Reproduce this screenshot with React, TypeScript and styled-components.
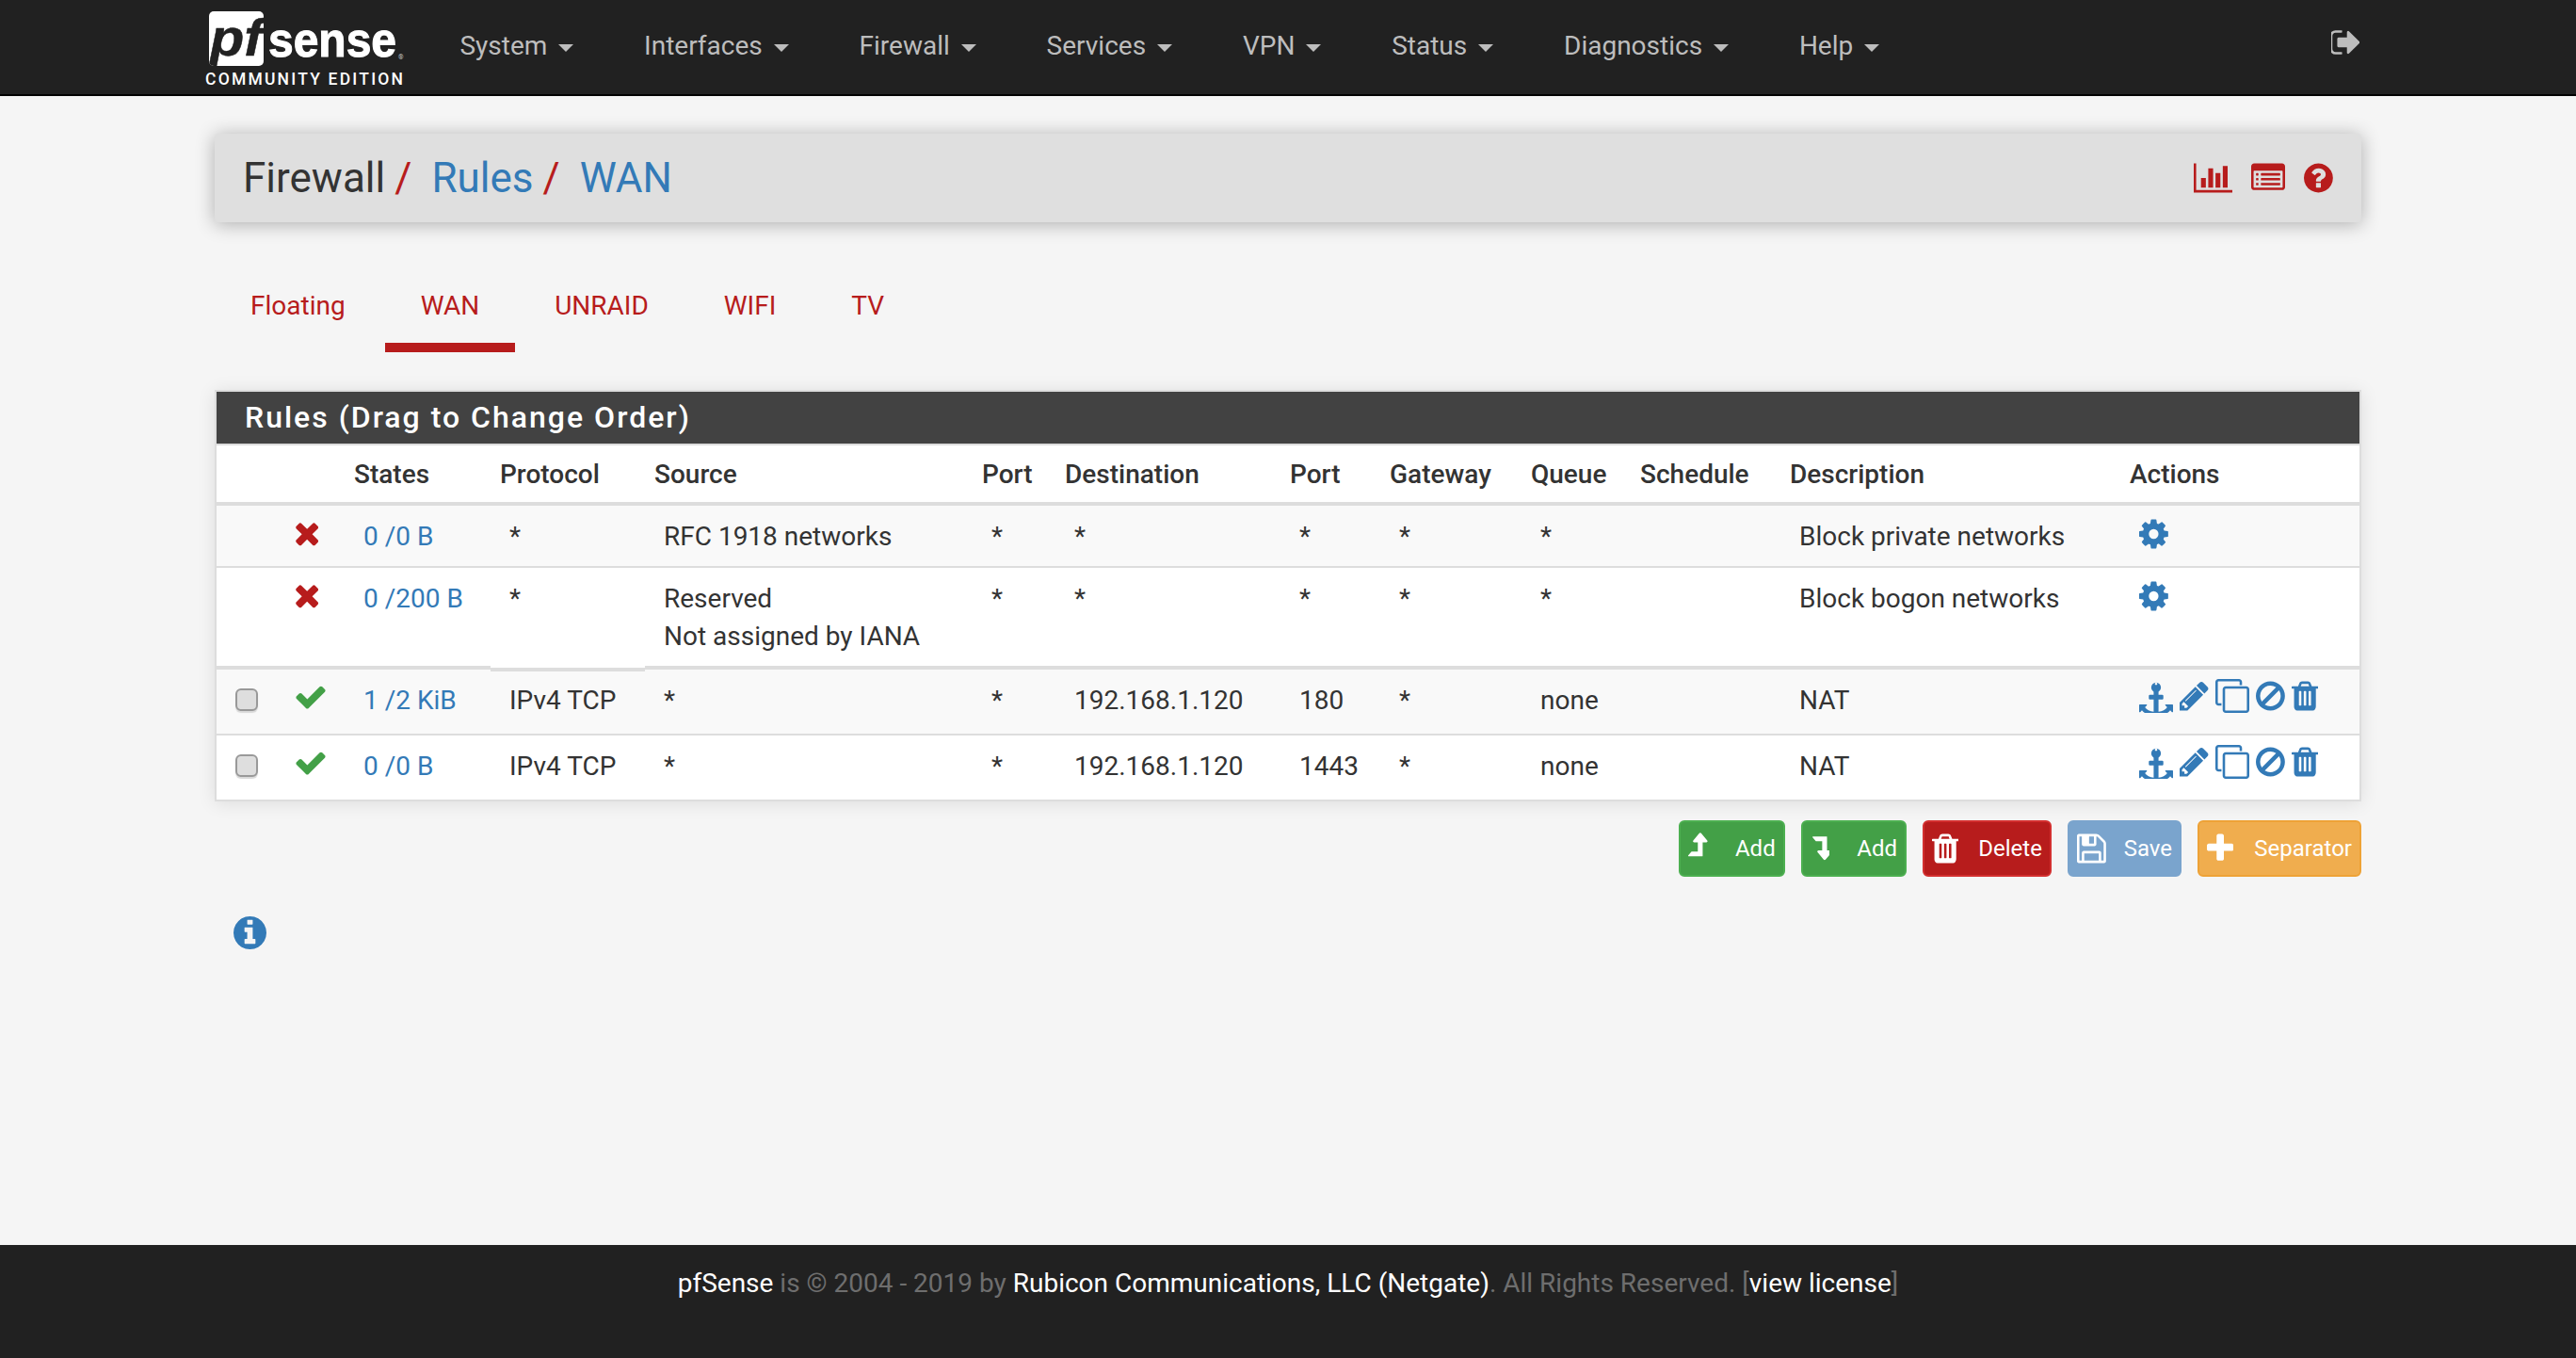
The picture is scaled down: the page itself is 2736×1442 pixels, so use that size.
import React from "react";
import styled, { createGlobalStyle } from "styled-components";

const Global = createGlobalStyle`
  html, body { margin: 0; padding: 0; height: 100%; background: #f5f5f5; }
  body { font-family: Roboto, "Liberation Sans", sans-serif; font-size: 28px; line-height: 40px; color: #212121; }
  #root { height: 100%; }
`;

const PATHS: Record<string, { d: string; x: number; w: number }> = {
  times: { x: 192, w: 1408, d: "M1490 1322q0 40-28 68l-136 136q-28 28-68 28t-68-28l-294-294-294 294q-28 28-68 28t-68-28l-136-136q-28-28-28-68t28-68l294-294-294-294q-28-28-28-68t28-68l136-136q28-28 68-28t68 28l294 294 294-294q28-28 68-28t68 28l136 136q28 28 28 68t-28 68l-294 294 294 294q28 28 28 68z" },
  check: { x: 0, w: 1792, d: "M1671 566q0 40-28 68l-724 724-136 136q-28 28-68 28t-68-28l-136-136-362-362q-28-28-28-68t28-68l136-136q28-28 68-28t68 28l294 295 656-657q28-28 68-28t68 28l136 136q28 28 28 68z" },
  cog: { x: 128, w: 1536, d: "M1152 896q0-106-75-181t-181-75-181 75-75 181 75 181 181 75 181-75 75-181zm512-109v222q0 12-8 23t-20 13l-185 28q-19 54-39 91 35 50 107 138 10 12 10 25t-9 23q-27 37-99 108t-94 71q-12 0-26-9l-138-108q-44 23-91 38-16 136-29 186-7 28-36 28h-222q-14 0-24.500-8.500t-11.500-21.500l-28-184q-49-16-90-37l-141 107q-10 9-25 9-14 0-25-11-126-114-165-168-7-10-7-23 0-12 8-23 15-21 51-66.500t54-70.500q-27-50-41-99l-183-27q-13-2-21-12.500t-8-23.500v-222q0-12 8-23t19-13l186-28q14-46 39-92-40-57-107-138-10-12-10-24 0-10 9-23 26-36 98.500-107.500t94.500-71.500q13 0 26 10l138 107q44-23 91-38 16-136 29-186 7-28 36-28h222q14 0 24.500 8.500t11.500 21.500l28 184q49 16 90 37l142-107q9-9 24-9 13 0 25 10 129 119 165 170 7 8 7 22 0 12-8 23-15 21-51 66.500t-54 70.500q26 50 41 98l183 28q13 2 21 12.500t8 23.500z" },
  anchor: { x: 0, w: 1792, d: "M960 256q0-26-19-45t-45-19-45 19-19 45 19 45 45 19 45-19 19-45zm832 1120v352q0 22-20 30-8 2-12 2-12 0-23-9l-93-93q-119 143-318.500 226.500t-429.500 83.500-429.500-83.500-318.500-226.500l-93 93q-9 9-23 9-4 0-12-2-20-8-20-30v-352q0-14 9-23t23-9h352q22 0 30 20 8 19-7 35l-100 100q67 91 189.500 153.500t271.500 82.500v-647h-192q-26 0-45-19t-19-45v-128q0-26 19-45t45-19h192v-163q-58-34-93-92.500t-35-128.500q0-106 75-181t181-75 181 75 75 181q0 70-35 128.500t-93 92.500v163h192q26 0 45 19t19 45v128q0 26-19 45t-45 19h-192v647q149-20 271.500-82.500t189.500-153.500l-100-100q-15-16-7-35 8-20 30-20h352q14 0 23 9t9 23z" },
  pencil: { x: 128, w: 1536, d: "M491 1536l91-91-235-235-91 91v107h128v128h107zm523-928q0-22-22-22-10 0-17 7l-542 542q-7 7-7 17 0 22 22 22 10 0 17-7l542-542q7-7 7-17zm-54-192l416 416-832 832h-416v-416zm683 96q0 53-37 90l-166 166-416-416 166-165q36-38 90-38 53 0 91 38l235 234q37 39 37 91z" },
  clone: { x: 0, w: 1792, d: "M1664 1632v-1088q0-13-9.500-22.500t-22.500-9.500h-1088q-13 0-22.500 9.500t-9.500 22.500v1088q0 13 9.500 22.500t22.500 9.500h1088q13 0 22.500-9.500t9.500-22.500zm128-1088v1088q0 66-47 113t-113 47h-1088q-66 0-113-47t-47-113v-1088q0-66 47-113t113-47h1088q66 0 113 47t47 113zm-384-384v160h-128v-160q0-13-9.500-22.500t-22.500-9.500h-1088q-13 0-22.500 9.500t-9.500 22.500v1088q0 13 9.500 22.500t22.500 9.500h160v128h-160q-66 0-113-47t-47-113v-1088q0-66 47-113t113-47h1088q66 0 113 47t47 113z" },
  ban: { x: 128, w: 1536, d: "M1440 893q0-161-87-295l-754 753q137 89 297 89 111 0 211.500-43.500t173.500-116.500 116-174.500 43-212.500zm-999 299l755-754q-135-91-300-91-148 0-273 73t-198 199-73 274q0 162 89 299zm1223-299q0 157-61 300t-163.500 246-245 164-298.500 61-298.500-61-245-164-163.500-246-61-300 61-299.500 163.500-245.500 245-164 298.500-61 298.500 61 245 164 163.500 245.500 61 299.500z" },
  trash: { x: 192, w: 1408, d: "M704 1376v-704q0-14-9-23t-23-9h-64q-14 0-23 9t-9 23v704q0 14 9 23t23 9h64q14 0 23-9t9-23zm256 0v-704q0-14-9-23t-23-9h-64q-14 0-23 9t-9 23v704q0 14 9 23t23 9h64q14 0 23-9t9-23zm256 0v-704q0-14-9-23t-23-9h-64q-14 0-23 9t-9 23v704q0 14 9 23t23 9h64q14 0 23-9t9-23zm-544-992h448l-48-117q-7-9-17-11h-317q-10 2-17 11zm928 32v64q0 14-9 23t-23 9h-96v948q0 83-47 143.500t-113 60.500h-832q-66 0-113-58.500t-47-141.500v-952h-96q-14 0-23-9t-9-23v-64q0-14 9-23t23-9h309l70-167q15-37 54-63t79-26h320q40 0 79 26t54 63l70 167h309q14 0 23 9t9 23z" },
  plus: { x: 192, w: 1408, d: "M1600 736v192q0 40-28 68t-68 28h-416v416q0 40-28 68t-68 28h-192q-40 0-68-28t-28-68v-416h-416q-40 0-68-28t-28-68v-192q0-40 28-68t68-28h416v-416q0-40 28-68t68-28h192q40 0 68 28t28 68v416h416q40 0 68 28t28 68z" },
  levelUp: { x: 384, w: 1024, d: "M1402 540q-18 36-58 36h-192v704q0 14-9 23t-23 9h-704q-21 0-29-18-8-20 4-35l160-192q9-11 25-11h320v-480h-192q-40 0-58-36-17-37 9-68l320-384q18-22 49-22t49 22l320 384q27 32 9 68z" },
  levelDown: { x: 384, w: 1024, d: "M520 256h704q14 0 23 9.500t9 22.500v704h192q40 0 58 37t-9 69l-320 384q-18 22-49 22t-49-22l-320-384q-26-31-9-69 18-37 58-37h192v-480h-320q-14 0-25-11l-160-192q-13-14-4-34 9-19 29-19z" },
  save: { x: 128, w: 1536, d: "M512 1536h768v-384h-768v384zm896 0h128v-896q0-14-10-38.500t-20-34.500l-281-281q-10-10-34-20t-39-10v416q0 40-28 68t-68 28h-576q-40 0-68-28t-28-68v-416h-128v1280h128v-416q0-40 28-68t68-28h832q40 0 68 28t28 68v416zm-384-928v-320q0-13-9.500-22.500t-22.500-9.500h-192q-13 0-22.500 9.500t-9.500 22.500v320q0 13 9.500 22.500t22.500 9.500h192q13 0 22.500-9.500t9.500-22.500zm640 32v928q0 40-28 68t-68 28h-1344q-40 0-68-28t-28-68v-1344q0-40 28-68t68-28h928q40 0 88 20t76 48l280 280q28 28 48 76t20 88z" },
  chart: { x: 0, w: 2048, d: "M640 896v512h-256v-512h256zm384-512v1024h-256v-1024h256zm1024 1152v128h-2048v-1536h128v1408h1920zm-640-896v768h-256v-768h256zm384-384v1152h-256v-1152h256z" },
  listAlt: { x: 0, w: 1792, d: "M384 1184v64q0 13-9.500 22.500t-22.500 9.500h-64q-13 0-22.500-9.500t-9.500-22.500v-64q0-13 9.500-22.500t22.500-9.500h64q13 0 22.500 9.500t9.500 22.500zm0-256v64q0 13-9.500 22.500t-22.500 9.500h-64q-13 0-22.500-9.500t-9.500-22.500v-64q0-13 9.500-22.500t22.500-9.500h64q13 0 22.500 9.500t9.500 22.500zm0-256v64q0 13-9.500 22.500t-22.500 9.500h-64q-13 0-22.500-9.500t-9.500-22.500v-64q0-13 9.500-22.500t22.500-9.500h64q13 0 22.500 9.500t9.500 22.500zm1152 512v64q0 13-9.500 22.500t-22.500 9.500h-960q-13 0-22.500-9.500t-9.500-22.500v-64q0-13 9.500-22.500t22.500-9.500h960q13 0 22.500 9.500t9.500 22.500zm0-256v64q0 13-9.500 22.500t-22.500 9.500h-960q-13 0-22.500-9.500t-9.500-22.500v-64q0-13 9.500-22.500t22.500-9.500h960q13 0 22.500 9.500t9.500 22.500zm0-256v64q0 13-9.500 22.500t-22.500 9.500h-960q-13 0-22.500-9.500t-9.500-22.500v-64q0-13 9.500-22.500t22.500-9.500h960q13 0 22.500 9.500t9.500 22.500zm128 704v-832q0-13-9.500-22.500t-22.500-9.500h-1472q-13 0-22.500 9.500t-9.500 22.500v832q0 13 9.500 22.500t22.500 9.500h1472q13 0 22.500-9.500t9.500-22.500zm128-1088v1088q0 66-47 113t-113 47h-1472q-66 0-113-47t-47-113v-1088q0-66 47-113t113-47h1472q66 0 113 47t47 113z" },
  question: { x: 128, w: 1536, d: "M1024 1376v-192q0-14-9-23t-23-9h-192q-14 0-23 9t-9 23v192q0 14 9 23t23 9h192q14 0 23-9t9-23zm256-672q0-88-55.500-163t-138.500-116-170-41q-243 0-371 213-15 24 8 42l132 100q7 6 19 6 16 0 25-12 53-68 86-92 34-24 86-24 48 0 85.500 26t37.500 59q0 38-20 61t-68 45q-63 28-115.500 86.500t-52.500 125.500v36q0 14 9 23t23 9h192q14 0 23-9t9-23q0-19 21.500-49.500t54.500-49.500q32-18 49-28.500t46-35 44.500-48 28-60.500 12.500-81zm384 192q0 209-103 385.500t-279.500 279.500-385.500 103-385.500-103-279.500-279.500-103-385.500 103-385.500 279.500-279.500 385.500-103 385.500 103 279.500 279.500 103 385.500z" },
  info: { x: 128, w: 1536, d: "M1152 1376v-160q0-14-9-23t-23-9h-96v-512q0-14-9-23t-23-9h-320q-14 0-23 9t-9 23v160q0 14 9 23t23 9h96v320h-96q-14 0-23 9t-9 23v160q0 14 9 23t23 9h448q14 0 23-9t9-23zm-128-896v-160q0-14-9-23t-23-9h-192q-14 0-23 9t-9 23v160q0 14 9 23t23 9h192q14 0 23-9t9-23zm640 416q0 209-103 385.500t-279.500 279.500-385.500 103-385.500-103-279.500-279.500-103-385.500 103-385.500 279.500-279.500 385.500-103 385.500 103 279.500 279.500 103 385.500z" },
  signOut: { x: 128, w: 1504, d: "M704 1440q0 4 1 20t.5 26.500-3 23.500-10 19.500-20.500 6.500h-320q-119 0-203.500-84.500t-84.500-203.500v-704q0-119 84.500-203.500t203.500-84.500h320q13 0 22.500 9.500t9.500 22.500q0 4 1 20t.5 26.500-3 23.500-10 19.500-20.500 6.500h-320q-66 0-113 47t-47 113v704q0 66 47 113t113 47h312l11.500 1 11.500 3 8 5.500 7 9 2 13.500zm928-544q0 26-19 45l-544 544q-19 19-45 19t-45-19-19-45v-288h-448q-26 0-45-19t-19-45v-384q0-26 19-45t45-19h448v-288q0-26 19-45t45-19 45 19l544 544q19 19 19 45z" },
};

const Svg = styled.svg<{ $size: number }>`
  display: block;
  flex: none;
  height: ${(p) => p.$size}px;
  fill: currentColor;
`;

const Icon = ({ name, size = 36 }: { name: keyof typeof PATHS; size?: number }) => {
  const g = PATHS[name];
  return (
    <Svg $size={size} width={(g.w / 1792) * size} viewBox={`${g.x} 0 ${g.w} 1792`} aria-hidden>
      <path d={g.d} />
    </Svg>
  );
};

const Page = styled.div`
  min-height: 100%;
  height: 1442px;
  display: flex;
  flex-direction: column;
`;
const TopBar = styled.header`
  height: 100px;
  flex: none;
  background: #212121;
  border-bottom: 2px solid #000;
  display: flex;
  justify-content: center;
`;
const TopInner = styled.div`
  width: 2280px;
  display: flex;
  align-items: flex-start;
`;
const LogoBox = styled.a`
  display: block;
  width: 212px;
  margin-left: -10px;
  flex: none;
`;
const Menu = styled.nav`
  display: flex;
  margin-left: 21px;
  flex: 1;
`;
const MenuItem = styled.a`
  display: flex;
  align-items: center;
  height: 98px;
  padding: 0 37.4px;
  gap: 12px;
  color: #bdbdbd;
  font-size: 28px;
`;
const Caret = styled.span`
  width: 0;
  height: 0;
  border-left: 8px solid transparent;
  border-right: 8px solid transparent;
  border-top: 8px solid #bdbdbd;
  margin-top: 3px;
`;
const LogoutLink = styled.a`
  color: #bdbdbd;
  margin: 27px 2px 0 0;
`;
const Main = styled.main`
  flex: 1;
  width: 2280px;
  margin: 0 auto;
`;
const Crumbs = styled.div`
  margin-top: 40px;
  height: 94px;
  background: #dfdfdf;
  border-radius: 4px;
  box-shadow: 0 2px 20px rgba(0, 0, 0, 0.3);
  display: flex;
  align-items: center;
  padding: 0 30px;
`;
const CrumbText = styled.h1`
  flex: 1;
  margin: 0;
  font-size: 44px;
  font-weight: 400;
  line-height: 60px;
  color: #333;
  display: flex;
`;
const CrumbLink = styled.a`
  color: #337ab7;
`;
const Slash = styled.span`
  color: #b71c1c;
  margin: 0 21px 0 10px;
`;
const CrumbIcons = styled.div`
  display: flex;
  gap: 20px;
  color: #b71c1c;
`;
const Tabs = styled.ul`
  list-style: none;
  margin: 38px 0 0;
  padding: 0;
  display: flex;
  gap: 4px;
`;
const Tab = styled.li<{ $active?: boolean }>`
  padding: 0 38px;
  height: 100px;
  box-sizing: border-box;
  color: #b71c1c;
  line-height: 102px;
  border-bottom: 10px solid ${(p) => (p.$active ? "#b71c1c" : "transparent")};
`;
const Card = styled.section`
  margin-top: 40px;
  background: #fff;
  border: 2px solid #ddd;
  box-shadow: 0 2px 18px rgba(0, 0, 0, 0.1);
`;
const CardHead = styled.h2`
  margin: 0;
  height: 55px;
  background: #424242;
  border-bottom: 2px solid #ddd;
  color: #fff;
  font-size: 32px;
  font-weight: 500;
  letter-spacing: 2px;
  line-height: 55px;
  padding-left: 30px;
`;
const Table = styled.table`
  width: 2276px;
  table-layout: fixed;
  border-collapse: separate;
  border-spacing: 0;
`;
const Th = styled.th`
  height: 64px;
  padding: 1px 0 0 10px;
  box-sizing: border-box;
  text-align: left;
  font-weight: 500;
  color: #333;
  border-bottom: 4px solid #ddd;
  white-space: nowrap;
`;
const Row = styled.tr<{ $alt?: boolean }>`
  background: ${(p) => (p.$alt ? "#f9f9f9" : "#fff")};
`;
const Td = styled.td<{ $h: number; $thick?: boolean; $last?: boolean; $pad?: number; $notch?: boolean }>`
  height: ${(p) => p.$h}px;
  padding: 13px 0 0 ${(p) => p.$pad ?? 20}px;
  box-sizing: border-box;
  vertical-align: top;
  color: #333;
  position: relative;
  white-space: nowrap;
  border-bottom: ${(p) => (p.$last ? 0 : p.$thick ? 4 : 2)}px solid #ddd;
  ${(p) =>
    p.$notch &&
    `
    &::after {
      content: "";
      position: absolute;
      left: 0;
      right: 0;
      bottom: -6px;
      height: 4px;
      background: #ddd;
      box-shadow: 0 -2px 0 #fff;
      z-index: 1;
    }
  `}
`;
const StateLink = styled.a`
  color: #337ab7;
`;
const Check = styled.span`
  display: block;
  width: 24px;
  height: 24px;
  margin-top: 7px;
  box-sizing: border-box;
  background: #dedede;
  border: 2px solid #999;
  border-radius: 6px;
  box-shadow: 0 2px 1px #d9d9d9;
`;
const Times = styled.span`
  display: block;
  color: #b71c1c;
  margin-top: -2px;
`;
const Tick = styled.span`
  display: block;
  color: #43a047;
  margin-top: -2px;
`;
const Actions = styled.div<{ $top: number }>`
  display: flex;
  gap: 7px;
  color: #337ab7;
  margin-top: ${(p) => p.$top}px;
`;
const Buttons = styled.div`
  margin-top: 20px;
  display: flex;
  justify-content: flex-end;
  gap: 17px;
`;
const Btn = styled.a<{ $bg: string; $line: string; $gap: number }>`
  display: flex;
  align-items: center;
  height: 60px;
  box-sizing: border-box;
  padding: 0 8px;
  gap: ${(p) => p.$gap}px;
  background: ${(p) => p.$bg};
  border: 2px solid ${(p) => p.$line};
  border-radius: 6px;
  color: #fff;
  font-size: 24px;
  line-height: 34px;
`;
const InfoBtn = styled.a`
  display: block;
  margin: 42px 0 0 20px;
  width: 35px;
  color: #337ab7;
`;
const InfoSvg = styled.svg`
  display: block;
  width: 35px;
  height: 35px;
  fill: currentColor;
`;
const Footer = styled.footer`
  height: 120px;
  flex: none;
  background: #212121;
  color: #6e6e6e;
  text-align: center;
  padding-top: 21px;
  box-sizing: border-box;
`;
const FootLink = styled.a`
  color: #fff;
`;

const Logo = () => (
  <svg width="212" height="96" viewBox="0 0 212 96" role="img" aria-label="pfSense Community Edition">
    <clipPath id="pfbox"><rect x="4" y="12" width="58" height="58" rx="5" /></clipPath>
    <rect x="4" y="12" width="58" height="58" rx="5" fill="#fff" />
    <g clipPath="url(#pfbox)">
      <text transform="translate(5 59) scale(1.35 1.25)" fontFamily="'Liberation Sans', sans-serif" fontSize="44" fontWeight="700" fontStyle="italic" fill="#212121" stroke="#212121" strokeWidth="0.4">pf</text>
    </g>
    <text transform="translate(67 60) scale(1.09 1.16)" fontFamily="'Liberation Sans', sans-serif" fontSize="44" fontWeight="700" fill="#fff" stroke="#fff" strokeWidth="0.9">sense</text>
    <text x="205" y="63" fontFamily="Roboto, sans-serif" fontSize="7" fill="#ccc">®</text>
    <text x="0" y="90" fontFamily="Roboto, sans-serif" fontSize="17.5" fontWeight="500" fill="#fff" textLength="210">COMMUNITY EDITION</text>
  </svg>
);

const menu = ["System", "Interfaces", "Firewall", "Services", "VPN", "Status", "Diagnostics", "Help"];
const cols = [71, 65, 155, 164, 348, 88, 239, 106, 150, 116, 159, 361, 254];
const heads = ["", "", "States", "Protocol", "Source", "Port", "Destination", "Port", "Gateway", "Queue", "Schedule", "Description", "Actions"];

type RuleRow = {
  check: boolean; ok: boolean; states: string; proto: string; source: string[]; port: string;
  dest: string; dport: string; gw: string; queue: string; desc: string; h: number; thick?: boolean; alt?: boolean; last?: boolean;
};
const rows: RuleRow[] = [
  { check: false, ok: false, states: "0 /0 B", proto: "*", source: ["RFC 1918 networks"], port: "*", dest: "*", dport: "*", gw: "*", queue: "*", desc: "Block private networks", h: 66, alt: true },
  { check: false, ok: false, states: "0 /200 B", proto: "*", source: ["Reserved", "Not assigned by IANA"], port: "*", dest: "*", dport: "*", gw: "*", queue: "*", desc: "Block bogon networks", h: 108, thick: true },
  { check: true, ok: true, states: "1 /2 KiB", proto: "IPv4 TCP", source: ["*"], port: "*", dest: "192.168.1.120", dport: "180", gw: "*", queue: "none", desc: "NAT", h: 70, alt: true },
  { check: true, ok: true, states: "0 /0 B", proto: "IPv4 TCP", source: ["*"], port: "*", dest: "192.168.1.120", dport: "1443", gw: "*", queue: "none", desc: "NAT", h: 68, last: true },
];

export default function App() {
  return (
    <Page>
      <Global />
      <TopBar>
        <TopInner>
          <LogoBox><Logo /></LogoBox>
          <Menu>
            {menu.map((m) => (
              <MenuItem key={m}>{m}<Caret /></MenuItem>
            ))}
          </Menu>
          <LogoutLink><Icon name="signOut" /></LogoutLink>
        </TopInner>
      </TopBar>
      <Main>
        <Crumbs>
          <CrumbText>
            Firewall<Slash>/</Slash><CrumbLink>Rules</CrumbLink><Slash>/</Slash><CrumbLink>WAN</CrumbLink>
          </CrumbText>
          <CrumbIcons>
            <Icon name="chart" />
            <Icon name="listAlt" />
            <Icon name="question" />
          </CrumbIcons>
        </Crumbs>
        <Tabs>
          <Tab>Floating</Tab>
          <Tab $active>WAN</Tab>
          <Tab>UNRAID</Tab>
          <Tab>WIFI</Tab>
          <Tab>TV</Tab>
        </Tabs>
        <Card>
          <CardHead>Rules (Drag to Change Order)</CardHead>
          <Table>
            <colgroup>{cols.map((c, i) => <col key={i} width={c} />)}</colgroup>
            <thead>
              <tr>{heads.map((h, i) => <Th key={i}>{h}</Th>)}</tr>
            </thead>
            <tbody>
              {rows.map((r, i) => {
                const c = { $h: r.h, $thick: r.thick, $last: r.last };
                return (
                  <Row key={i} $alt={r.alt}>
                    <Td {...c}>{r.check && <Check />}</Td>
                    <Td {...c} $pad={11}>
                      {r.ok ? <Tick><Icon name="check" /></Tick> : <Times><Icon name="times" /></Times>}
                    </Td>
                    <Td {...c}><StateLink>{r.states}</StateLink></Td>
                    <Td {...c} $notch={i === 1}>{r.proto}</Td>
                    <Td {...c}>{r.source.map((s) => <div key={s}>{s}</div>)}</Td>
                    <Td {...c}>{r.port}</Td>
                    <Td {...c}>{r.dest}</Td>
                    <Td {...c}>{r.dport}</Td>
                    <Td {...c}>{r.gw}</Td>
                    <Td {...c}>{r.queue}</Td>
                    <Td {...c}></Td>
                    <Td {...c}>{r.desc}</Td>
                    <Td {...c}>
                      {r.ok ? (
                        <Actions $top={-3}>
                          <Icon name="anchor" />
                          <Icon name="pencil" />
                          <Icon name="clone" />
                          <Icon name="ban" />
                          <Icon name="trash" />
                        </Actions>
                      ) : (
                        <Actions $top={-1}><Icon name="cog" /></Actions>
                      )}
                    </Td>
                  </Row>
                );
              })}
            </tbody>
          </Table>
        </Card>
        <Buttons>
          <Btn $bg="#43a047" $line="#4caf50" $gap={29}><Icon name="levelUp" />Add</Btn>
          <Btn $bg="#43a047" $line="#4caf50" $gap={29}><Icon name="levelDown" />Add</Btn>
          <Btn $bg="#b71c1c" $line="#d32f2f" $gap={21}><Icon name="trash" />Delete</Btn>
          <Btn $bg="#7aa4cd" $line="#7aa4cd" $gap={19}><Icon name="save" />Save</Btn>
          <Btn $bg="#f0ad4e" $line="#eea236" $gap={22}><Icon name="plus" />Separator</Btn>
        </Buttons>
        <InfoBtn>
          <InfoSvg viewBox="128 128 1536 1536" aria-hidden><path d={PATHS.info.d} /></InfoSvg>
        </InfoBtn>
      </Main>
      <Footer>
        <FootLink>pfSense</FootLink> is © 2004 - 2019 by <FootLink>Rubicon Communications, LLC (Netgate)</FootLink>. All Rights Reserved. [<FootLink>view license</FootLink>]
      </Footer>
    </Page>
  );
}
